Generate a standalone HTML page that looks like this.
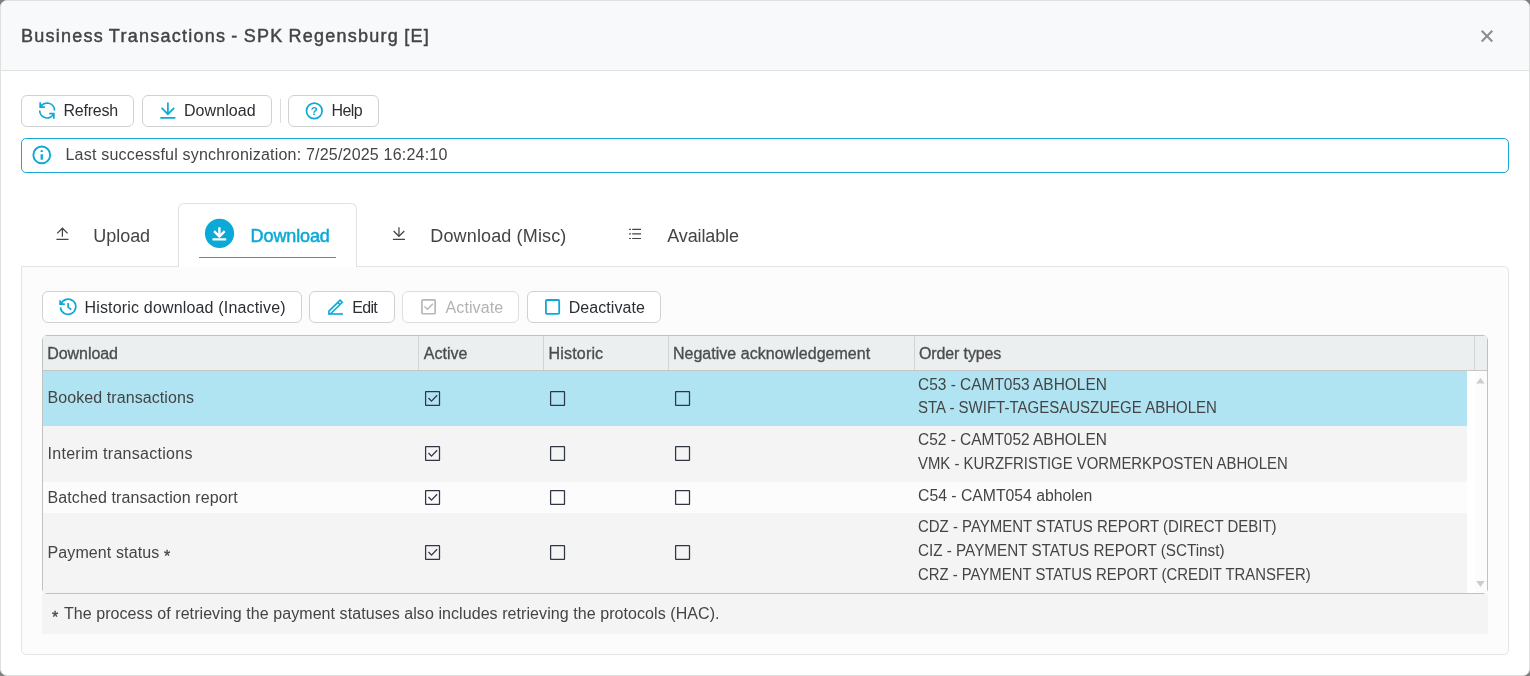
<!DOCTYPE html>
<html lang="en">
<head>
<meta charset="utf-8">
<title>Business Transactions - SPK Regensburg [E]</title>
<style>
*{box-sizing:border-box;margin:0;padding:0}
html,body{width:1530px;height:676px;overflow:hidden;background:#7f7f7f}
body{font-family:"Liberation Sans",sans-serif;font-size:16px;color:#444;position:relative}
.abs{position:absolute}
.modal{will-change:transform;position:absolute;left:0;top:0;width:1530px;height:676px;background:#fff;border:1px solid #dfe1e1;border-radius:7px;overflow:hidden}
.hdr{position:absolute;left:0;top:0;width:1528px;height:70px;background:#f8f9fa;border-bottom:1px solid #dfe1e3}
.title{position:absolute;left:20px;top:24px;font-size:18px;line-height:22px;letter-spacing:.9px;color:#444;white-space:nowrap;-webkit-text-stroke:.45px #444}
.btn{position:absolute;height:32px;border:1px solid #cfd1d3;border-radius:6px;background:#fff;white-space:nowrap;font-size:16px;color:#2b2f33}
.btn span{position:absolute;top:6px;line-height:18px}
.btn svg{position:absolute}
.btn.dis{border-color:#dedede;color:#b3b3b3}
.t{position:absolute;white-space:nowrap}
.tab{position:absolute;font-size:18px;line-height:22px;white-space:nowrap;color:#444}
.panel{position:absolute;left:20px;top:265px;width:1488px;height:389px;border:1px solid #e2e4e6;border-radius:0 5px 5px 5px;background:#fcfcfc}
.acttab{position:absolute;left:177px;top:202px;width:179px;height:64px;border:1px solid #dee2e6;border-bottom:0;border-radius:6px 6px 0 0;background:#fff}
.grid{position:absolute;left:41px;top:334px;width:1446px;height:259px;border:1px solid #bfc2c3;border-radius:5px;background:#fff}
.gh{position:absolute;left:0;top:0;width:1444px;height:35px;background:#eceff0;border-bottom:1px solid #c6c6c6}
.gh b{position:absolute;top:9px;font-size:16px;line-height:18px;font-weight:normal;color:#4c4c4c;-webkit-text-stroke:.32px #4c4c4c;white-space:nowrap}
.gh i{position:absolute;top:0;width:1px;height:34px;background:#d0d4d5}
.row{position:absolute;left:0;width:1424px}
.row .c1{position:absolute;left:4.5px;font-size:16px;line-height:18px;white-space:nowrap;color:#444}
.row .ot{position:absolute;left:874.8px;font-size:16px;line-height:18px;white-space:nowrap;color:#444;transform-origin:0 50%}
.ast,.ast2{position:relative;top:4px;-webkit-text-stroke:.3px #444}
.cb{position:absolute;width:17px;height:17px;fill:none;stroke:#303643}
</style>
</head>
<body>
<div class="modal">
  <div class="hdr">
    <div class="title" id="title" style="letter-spacing:1.25px;word-spacing:-1.15px">Business Transactions - SPK Regensburg [E]</div>
    <svg class="abs" style="left:1479px;top:28px" width="14" height="14" viewBox="0 0 14 14"><path d="M1.7 1.8 L12.3 12.4 M12.3 1.8 L1.7 12.4" stroke="#8e8e8e" stroke-width="2.1" fill="none"/></svg>
  </div>

  <!-- toolbar -->
  <div class="btn" style="left:20px;top:94px;width:113px"><span id="b_refresh" style="left:41.5px;letter-spacing:-0.25px">Refresh</span></div>
  <div class="btn" style="left:141px;top:94px;width:130px"><span id="b_download" style="left:41.0px;letter-spacing:0.07px">Download</span></div>
  <div class="abs" style="left:279px;top:98px;width:1px;height:24px;background:#dcdcdc"></div>
  <div class="btn" style="left:287px;top:94px;width:91px"><span id="b_help" style="left:42.4px;letter-spacing:-0.56px">Help</span></div>

  <!-- info -->
  <div class="abs" style="left:20px;top:137px;width:1488px;height:35px;border:1px solid #1aa9d6;border-radius:5px;background:#fff">
    <div class="t" id="info" style="left:43.5px;top:6.0px;line-height:20px;letter-spacing:0.20px">Last successful synchronization: 7/25/2025 16:24:10</div>
  </div>

  <!-- tabs -->
  <div class="panel"></div>
  <div class="acttab"></div>
  <div class="tab" id="tab_upload" style="left:92.2px;top:223.9px;letter-spacing:-0.02px">Upload</div>
    <div class="tab" id="tab_download" style="left:249.6px;top:223.9px;color:#0aa9d6;-webkit-text-stroke:.5px #0aa9d6;letter-spacing:-0.11px">Download</div>
  <div class="abs" style="left:198px;top:255.75px;width:137px;height:1.3px;background:#0aa9d6"></div>
  <div class="tab" id="tab_misc" style="left:429.3px;top:223.9px;letter-spacing:0.14px">Download (Misc)</div>
  <div class="tab" id="tab_avail" style="left:666.3px;top:223.9px;letter-spacing:-0.14px">Available</div>

  <!-- inner toolbar -->
  <div class="btn" style="left:41px;top:290px;width:260px"><span id="b_hist" style="top:7.0px;left:41.5px;letter-spacing:0.17px">Historic download (Inactive)</span></div>
  <div class="btn" style="left:308px;top:290px;width:86px"><span id="b_edit" style="top:7.0px;left:42.3px;letter-spacing:-0.74px">Edit</span></div>
  <div class="btn dis" style="left:401px;top:290px;width:117px"><span id="b_act" style="top:7.0px;left:42.5px;letter-spacing:0.11px">Activate</span></div>
  <div class="btn" style="left:526px;top:290px;width:134px"><span id="b_deact" style="top:7.0px;left:40.7px;letter-spacing:0.07px">Deactivate</span></div>

  <!-- grid -->
  <div class="grid">
    <div class="gh">
      <b id="h_download" style="left:4.2px;letter-spacing:-0.05px">Download</b><i style="left:375px"></i>
      <b id="h_active" style="left:380.7px;letter-spacing:0.04px">Active</b><i style="left:500px"></i>
      <b id="h_historic" style="left:505.6px;letter-spacing:0.17px">Historic</b><i style="left:625px"></i>
      <b id="h_neg" style="left:629.9px;letter-spacing:0.03px">Negative acknowledgement</b><i style="left:871px"></i>
      <b id="h_order" style="left:876.0px;letter-spacing:-0.13px">Order types</b><i style="left:1431px"></i>
    </div>
    <div class="abs" style="left:1432px;top:35px;width:12px;height:222px;background:#fcfcfc"></div>
    <div class="row" style="top:35px;height:55px;background:#b1e4f3">
      <div class="c1" id="r1c1" style="top:18.1px;letter-spacing:0.08px">Booked transactions</div>
      <svg class="cb" style="left:381px;top:19px" viewBox="0 0 17 17"><rect x="1.6" y="1.6" width="13.9" height="13.8" rx=".3" stroke-width="1.25"/><path d="M4.5 8 L7.5 11.1 L13.1 5.25" stroke-width="1.3"/></svg>
      <svg class="cb" style="left:506px;top:19px" viewBox="0 0 17 17"><rect x="1.6" y="1.6" width="13.9" height="13.8" rx=".3" stroke-width="1.25"/></svg>
      <svg class="cb" style="left:631px;top:19px" viewBox="0 0 17 17"><rect x="1.6" y="1.6" width="13.9" height="13.8" rx=".3" stroke-width="1.25"/></svg>
      <div class="ot" id="o1" style="top:5.0px;transform:scaleX(0.9655)">C53 - CAMT053 ABHOLEN</div>
      <div class="ot" id="o2" style="top:28.0px;transform:scaleX(0.9382)">STA - SWIFT-TAGESAUSZUEGE ABHOLEN</div>
    </div>
    <div class="row" style="top:90px;height:56px;background:#f4f4f4">
      <div class="c1" id="r2c1" style="top:19.2px;letter-spacing:0.28px">Interim transactions</div>
      <svg class="cb" style="left:381px;top:19px" viewBox="0 0 17 17"><rect x="1.6" y="1.6" width="13.9" height="13.8" rx=".3" stroke-width="1.25"/><path d="M4.5 8 L7.5 11.1 L13.1 5.25" stroke-width="1.3"/></svg>
      <svg class="cb" style="left:506px;top:19px" viewBox="0 0 17 17"><rect x="1.6" y="1.6" width="13.9" height="13.8" rx=".3" stroke-width="1.25"/></svg>
      <svg class="cb" style="left:631px;top:19px" viewBox="0 0 17 17"><rect x="1.6" y="1.6" width="13.9" height="13.8" rx=".3" stroke-width="1.25"/></svg>
      <div class="ot" id="o3" style="top:5.0px;transform:scaleX(0.9655)">C52 - CAMT052 ABHOLEN</div>
      <div class="ot" id="o4" style="top:29.0px;transform:scaleX(0.9302)">VMK - KURZFRISTIGE VORMERKPOSTEN ABHOLEN</div>
    </div>
    <div class="row" style="top:146px;height:31px;background:#fcfcfc">
      <div class="c1" id="r3c1" style="top:6.6px;letter-spacing:0.10px">Batched transaction report</div>
      <svg class="cb" style="left:381px;top:7px" viewBox="0 0 17 17"><rect x="1.6" y="1.6" width="13.9" height="13.8" rx=".3" stroke-width="1.25"/><path d="M4.5 8 L7.5 11.1 L13.1 5.25" stroke-width="1.3"/></svg>
      <svg class="cb" style="left:506px;top:7px" viewBox="0 0 17 17"><rect x="1.6" y="1.6" width="13.9" height="13.8" rx=".3" stroke-width="1.25"/></svg>
      <svg class="cb" style="left:631px;top:7px" viewBox="0 0 17 17"><rect x="1.6" y="1.6" width="13.9" height="13.8" rx=".3" stroke-width="1.25"/></svg>
      <div class="ot" id="o5" style="top:5.0px;transform:scaleX(0.9852)">C54 - CAMT054 abholen</div>
    </div>
    <div class="row" style="top:177px;height:80px;background:#f4f4f4">
      <div class="c1" id="r4c1" style="top:30.5px;letter-spacing:0.11px">Payment status<span class="ast"> *</span></div>
      <svg class="cb" style="left:381px;top:31px" viewBox="0 0 17 17"><rect x="1.6" y="1.6" width="13.9" height="13.8" rx=".3" stroke-width="1.25"/><path d="M4.5 8 L7.5 11.1 L13.1 5.25" stroke-width="1.3"/></svg>
      <svg class="cb" style="left:506px;top:31px" viewBox="0 0 17 17"><rect x="1.6" y="1.6" width="13.9" height="13.8" rx=".3" stroke-width="1.25"/></svg>
      <svg class="cb" style="left:631px;top:31px" viewBox="0 0 17 17"><rect x="1.6" y="1.6" width="13.9" height="13.8" rx=".3" stroke-width="1.25"/></svg>
      <div class="ot" id="o6" style="top:5.0px;transform:scaleX(0.9351)">CDZ - PAYMENT STATUS REPORT (DIRECT DEBIT)</div>
      <div class="ot" id="o7" style="top:29.0px;transform:scaleX(0.9523)">CIZ - PAYMENT STATUS REPORT (SCTinst)</div>
      <div class="ot" id="o8" style="top:53.0px;transform:scaleX(0.9299)">CRZ - PAYMENT STATUS REPORT (CREDIT TRANSFER)</div>
    </div>
  </div>
  <div class="abs" style="left:41px;top:593px;width:1446px;height:40px;background:#f4f4f4">
    <div class="t" style="left:10px;top:10px;line-height:20px"><span class="ast2">*</span><span id="foot" style="margin-left:5.7px;letter-spacing:0.07px">The process of retrieving the payment statuses also includes retrieving the protocols (HAC).</span></div>
  </div>

  <!-- icon overlay (absolute page coordinates) -->
  <svg class="abs" style="left:-1px;top:-1px;pointer-events:none" width="1530" height="676" viewBox="0 0 1530 676" fill="none" stroke-linecap="butt" stroke-linejoin="miter">
    <!-- refresh -->
    <g stroke="#0aa9d6" stroke-width="1.7">
      <path d="M40.39 107.37 A7.4 7.4 0 0 1 54.5 110.5"/>
      <path d="M40.2 102.2 V107.2 H44.9"/>
      <path d="M39.7 110.5 A7.4 7.4 0 0 0 53.78 113.7"/>
      <path d="M49.3 113.6 H53.8 V118.7"/>
    </g>
    <!-- download (toolbar) -->
    <g stroke="#0aa9d6" stroke-width="1.7">
      <path d="M167.9 102.6 V114"/>
      <path d="M161.6 107.9 L167.9 114.2 L174.2 107.9"/>
      <path d="M160.3 117.8 H175.4"/>
    </g>
    <!-- help -->
    <circle cx="314.3" cy="110.9" r="7.8" stroke="#0aa9d6" stroke-width="1.7"/>
    <text x="314.2" y="114.6" text-anchor="middle" font-family="Liberation Sans, sans-serif" font-weight="bold" font-size="11.5" fill="#0aa9d6" stroke="none">?</text>
    <!-- info -->
    <circle cx="41.75" cy="154.9" r="8.4" stroke="#0aa9d6" stroke-width="1.9"/>
    <path d="M41.75 150.2 V152.1 M41.75 154.2 V159.8" stroke="#0aa9d6" stroke-width="2.3"/>
    <!-- tab: upload -->
    <g stroke="#444" stroke-width="1.25">
      <path d="M62.4 228.3 V236.8"/>
      <path d="M57.2 233.4 L62.4 228.2 L67.6 233.4"/>
      <path d="M56.4 239.3 H68.5"/>
    </g>
    <!-- tab: download (active) -->
    <circle cx="219.5" cy="233.4" r="14.6" fill="#0aa9d6"/>
    <g stroke="#fff" stroke-width="2.4">
      <path d="M219.4 227.2 V236.4"/>
      <path d="M214.1 231.2 L219.4 236.5 L224.7 231.2"/>
      <path d="M212.5 239.4 H226.2" stroke-width="2.1"/>
    </g>
    <!-- tab: download misc -->
    <g stroke="#444" stroke-width="1.25">
      <path d="M398.95 227.2 V236"/>
      <path d="M393.6 231 L398.95 236.3 L404.3 231"/>
      <path d="M392.9 239.3 H405"/>
    </g>
    <!-- tab: available -->
    <g stroke="#444" stroke-width="1.15">
      <path d="M629.1 229.3 H630.9 M632.2 229.3 H641"/>
      <path d="M629.1 233.9 H630.9 M632.2 233.9 H641"/>
      <path d="M629.1 238.5 H630.9 M632.2 238.5 H641"/>
    </g>
    <!-- history -->
    <g stroke="#0aa9d6" stroke-width="1.7">
      <path d="M60.9 304.2 A7.65 7.65 0 1 1 60.5 307.4"/>
      <path d="M60.1 300.2 V304.2 H64.8"/>
      <path d="M68.1 303 V307.1 L71.3 309.6"/>
    </g>
    <!-- edit -->
    <g stroke="#0aa9d6" stroke-width="1.6">
      <path d="M328.9 314 V311.1 L340.1 300.1 L342.3 302.2 L330.4 314"/>
      <path d="M328.1 314 H343"/>
      <path d="M337.8 302.4 L340 304.5"/>
    </g>
    <!-- activate (disabled) -->
    <rect x="421.95" y="299.95" width="13.2" height="13.8" rx="1" stroke="#b7b7b7" stroke-width="1.7"/>
    <path d="M424.4 306.4 L427.5 309.3 L432.9 303.8" stroke="#b7b7b7" stroke-width="1.4"/>
    <!-- deactivate -->
    <rect x="545.9" y="300" width="13.3" height="13.8" rx="1" stroke="#0aa9d6" stroke-width="1.8"/>
    <!-- scrollbar arrows -->
    <path d="M1476.2 383.6 L1480.45 377.9 L1484.7 383.6 Z" fill="#cdcdcd" stroke="none"/>
    <path d="M1476.2 581 L1480.45 586.9 L1484.7 581 Z" fill="#cdcdcd" stroke="none"/>
  </svg>
</div>
</body>
</html>
